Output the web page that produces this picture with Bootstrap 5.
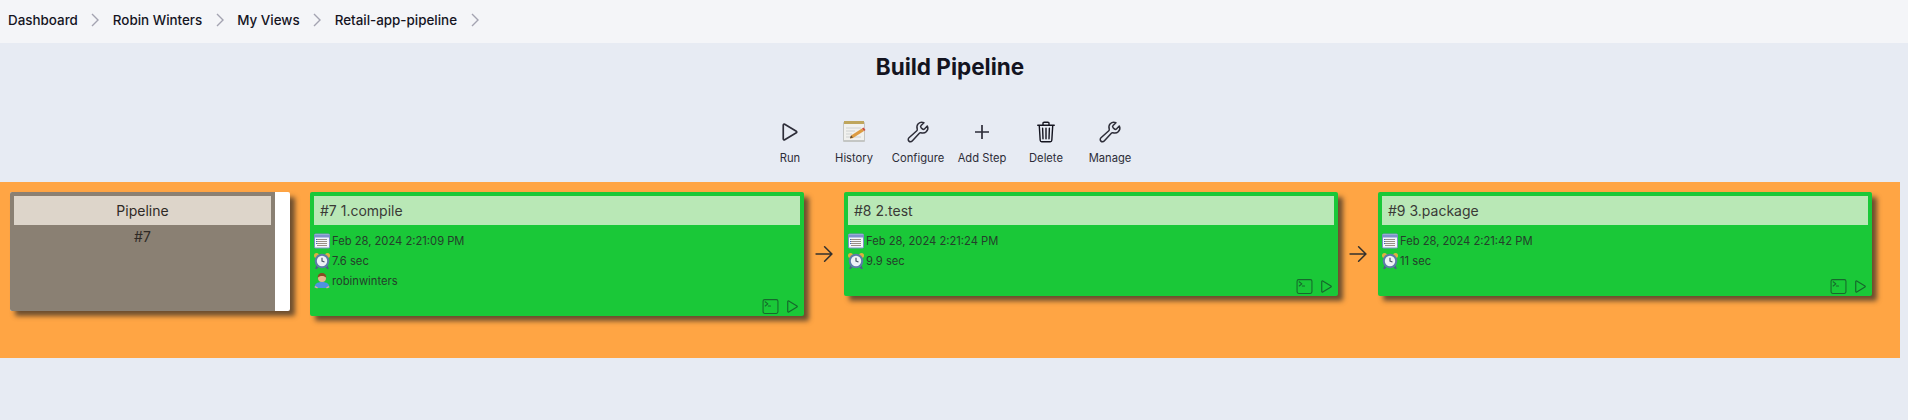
<!DOCTYPE html>
<html lang="en">

<head>
    <meta charset="UTF-8" />
    <meta name="viewport" content="width=device-width, initial-scale=1.0" />
    <title>Build Pipeline</title>
    <link href="https://cdn.jsdelivr.net/npm/bootstrap@5.3.3/dist/css/bootstrap.min.css" rel="stylesheet" />
    <style>
        body {
            background: #e7ebf3;
            font-family: Inter, "Liberation Sans", sans-serif;
            color: #14141f;
            height: 420px;
            overflow: hidden;
        }

        .crumb-bar {
            height: 43px;
            background: #f4f5f8;
            padding-left: 8px;
            padding-bottom: 3px;
            font-size: 13.4px;
            font-weight: 450;
            gap: 14.5px;
        }

        .crumb-bar a {
            color: #14141f;
            text-decoration: none;
        }

        .crumb-sep {
            width: 8px;
            height: 14px;
            margin: 0 -1px;
            color: #a3a3b1;
        }

        .page-main {
            width: 1900px;
        }

        .page-title {
            font-size: 22.5px;
            font-weight: 700;
            line-height: 30px;
            margin: 9px 0 0;
        }

        .tool-row {
            margin-top: 38px;
            height: 62px;
        }

        .tool-item {
            width: 64px;
            font-size: 11.2px;
            line-height: 15px;
            color: #2d2d38;
            text-decoration: none;
        }

        .tool-icon {
            width: 24px;
            height: 24px;
            margin-bottom: 7px;
        }

        .pipe-band {
            width: 1900px;
            height: 176px;
            background: #ffa544;
            padding: 10px;
        }

        .pipe-head {
            width: 280px;
            height: 119px;
            background: #fff;
            border-radius: 2px;
            box-shadow: 5px 5px 5px rgba(60, 50, 40, .75);
            flex-shrink: 0;
        }

        .pipe-head-inner {
            width: 265px;
            background: #8a8073;
            padding: 4px;
            color: #2f2a26;
            font-size: 14px;
        }

        .pipe-head-title {
            width: 257px;
            height: 29px;
            background: #ddd5ca;
            line-height: 29px;
            margin-bottom: 1px;
        }

        .pipe-gap {
            width: 40px;
            height: 124px;
            flex-shrink: 0;
            color: #33302c;
        }

        .pipe-gap svg {
            width: 26px;
            height: 26px;
        }

        .pipe-spacer {
            width: 20px;
            flex-shrink: 0;
        }

        .stage {
            width: 494px;
            background: #1ac838;
            padding: 4px;
            border-radius: 2px;
            box-shadow: 5px 5px 5px rgba(60, 50, 40, .75);
            flex-shrink: 0;
            color: #24402b;
            font-size: 11.2px;
        }

        .stage-tall {
            height: 124px;
        }

        .stage-short {
            height: 104px;
        }

        .stage-title {
            height: 29px;
            background: #b9e8b6;
            color: #3a3a36;
            font-size: 14px;
            line-height: 29px;
            padding-left: 6px;
        }

        .stage-meta {
            height: 20px;
            gap: 2px;
        }

        .stage-meta svg {
            width: 16px;
            height: 16px;
            flex-shrink: 0;
        }

        .stage-list {
            margin-top: 6px;
        }

        .stage-foot {
            bottom: 1px;
            right: 3px;
            gap: 5px;
            color: #16682c;
        }

        .stage-foot .run-ico {
            width: 17px;
            height: 17px;
        }

        .stage-foot .term-ico {
            width: 17px;
            height: 17px;
        }
    </style>
</head>

<body class="m-0">
    <svg width="0" height="0" class="position-absolute">
        <defs>
            <symbol id="ic-chev" viewBox="0 0 8 14">
                <path d="M1 1l6 6-6 6" fill="none" stroke="currentColor" stroke-width="1.4" />
            </symbol>
            <symbol id="ic-play" viewBox="0 0 512 512">
                <path d="M112 111v290c0 17.44 17 28.52 31 20.16l247.9-148.37c12.12-7.25 12.12-26.33 0-33.58L143 90.84c-14-8.36-31 2.72-31 20.16z" fill="none" stroke="currentColor" stroke-width="36" stroke-miterlimit="10" />
            </symbol>
            <symbol id="ic-wrench" viewBox="0 0 512 512">
                <path d="M393.87 190a32.1 32.1 0 01-45.25 0l-26.57-26.57a32.09 32.09 0 010-45.26L382.19 58a1 1 0 00-.3-1.64c-38.82-16.64-89.15-8.16-121.11 23.57-30.59 30.35-32.32 76-21.12 115.84a31.93 31.93 0 01-9.06 32.08L64 380a48.17 48.17 0 1068 68l153.2-167.23a31.93 31.93 0 0131.6-9.13c39.54 10.59 84.54 8.6 114.72-21.19 32.49-32 39.5-88.56 23.75-120.93a1 1 0 00-1.6-.26z" fill="none" stroke="currentColor" stroke-width="32" stroke-linecap="round" stroke-miterlimit="10" />
            </symbol>
            <symbol id="ic-term" viewBox="0 0 512 512">
                <rect x="32" y="48" width="448" height="416" rx="48" ry="48" fill="none" stroke="currentColor" stroke-width="32" stroke-linejoin="round" />
                <path d="M96 112l80 64-80 64M192 240h64" fill="none" stroke="currentColor" stroke-width="32" stroke-linecap="round" stroke-linejoin="round" />
            </symbol>
            <symbol id="ic-arrow" viewBox="0 0 512 512">
                <path d="M268 112l144 144-144 144M392 256H100" fill="none" stroke="currentColor" stroke-width="30" stroke-linecap="round" stroke-linejoin="round" />
            </symbol>
            <symbol id="ic-cal" viewBox="0 0 16 16">
                <rect x=".5" y="1" width="15" height="14" rx="1" fill="#f4f6fb" stroke="#7b8fc4" />
                <rect x="1" y="1.5" width="14" height="3" fill="#7d92cc" />
                <path d="M3 6.500h10M3 8.500h10M3 10.500h10M3 12.500h10" stroke="#9a8f86" />
                <path d="M2 6.500h1M2 8.500h1M2 10.500h1" stroke="#3d63c0" />
            </symbol>
            <symbol id="ic-clock" viewBox="0 0 16 16">
                <circle cx="2.500" cy="2.500" r="2.500" fill="#e0b040" />
                <circle cx="13.500" cy="2.500" r="2.500" fill="#e0b040" />
                <path d="M3.500 13l-1.500 3M12.500 13l1.500 3" stroke="#4a5f86" stroke-width="2" />
                <circle cx="8" cy="8" r="7.300" fill="#5d7ba8" />
                <circle cx="8" cy="8" r="5.200" fill="#eef2f6" />
                <path d="M8 4.800V8l2.500 1" fill="none" stroke="#4a5568" stroke-width="1.200" />
            </symbol>
            <symbol id="ic-user" viewBox="0 0 16 16">
                <path d="M.5 15c0-4 2.500-6 7.500-6s7.500 2 7.500 6z" fill="#4f92e0" />
                <circle cx="8" cy="5" r="4" fill="#eab58c" />
                <path d="M3.800 5C3.500 1.500 5.500 0 8 0s4.500 1.500 4.200 5C11.500 3.500 9.500 3 8 3s-3.500.5-4.200 2z" fill="#8a4a22" />
                <path d="M1 13.500l2.500 1.500M15 13.500L12.500 15" stroke="#eab58c" stroke-width="1.300" />
            </symbol>
        </defs>
    </svg>

    <nav class="crumb-bar d-flex align-items-center">
        <a href="#">Dashboard</a>
        <svg class="crumb-sep"><use href="#ic-chev" /></svg>
        <a href="#">Robin Winters</a>
        <svg class="crumb-sep"><use href="#ic-chev" /></svg>
        <a href="#">My Views</a>
        <svg class="crumb-sep"><use href="#ic-chev" /></svg>
        <a href="#">Retail-app-pipeline</a>
        <svg class="crumb-sep"><use href="#ic-chev" /></svg>
    </nav>

    <main class="page-main">
        <h1 class="page-title text-center">Build Pipeline</h1>

        <div class="tool-row d-flex justify-content-center">
            <a href="#" class="tool-item d-flex flex-column align-items-center">
                <svg class="tool-icon"><use href="#ic-play" /></svg>Run
            </a>
            <a href="#" class="tool-item d-flex flex-column align-items-center">
                <svg class="tool-icon" viewBox="0 0 24 24">
                    <rect x="1" y="2" width="22" height="20" rx="1" fill="#c4c6c4" />
                    <rect x="2" y="4" width="20" height="16" fill="#f1f1ee" />
                    <rect x="2" y="1" width="20" height="3" fill="#bfa65c" />
                    <path d="M4 8h15M4 11h9M4 14h6M4 17h15" stroke="#cfd2d2" />
                    <path d="M9 15.500l11-7 2 2.500-11 7-3 .8z" fill="#dd9c42" />
                    <path d="M20 8.500l1.500-1 2 2.500-1.500 1z" fill="#cf4a3c" />
                    <path d="M8 18.300l1-2.800 2 2z" fill="#5a4630" />
                </svg>History
            </a>
            <a href="#" class="tool-item d-flex flex-column align-items-center">
                <svg class="tool-icon"><use href="#ic-wrench" /></svg>Configure
            </a>
            <a href="#" class="tool-item d-flex flex-column align-items-center">
                <svg class="tool-icon" viewBox="0 0 24 24">
                    <path d="M12 5v14M5 12h14" fill="none" stroke="#2d2d38" stroke-width="1.700" />
                </svg>Add Step
            </a>
            <a href="#" class="tool-item d-flex flex-column align-items-center">
                <svg class="tool-icon" viewBox="0 0 512 512">
                    <path d="M112 112l20 320c.95 18.49 14.4 32 32 32h184c17.67 0 30.87-13.51 32-32l20-320M80 112h352M192 112V72a23.93 23.93 0 0124-24h80a23.93 23.93 0 0124 24v40M256 176v224M184 176l8 224M328 176l-8 224" fill="none" stroke="#14141f" stroke-width="30" stroke-linecap="round" stroke-linejoin="round" />
                </svg>Delete
            </a>
            <a href="#" class="tool-item d-flex flex-column align-items-center">
                <svg class="tool-icon"><use href="#ic-wrench" /></svg>Manage
            </a>
        </div>

        <div class="pipe-band d-flex align-items-start">
            <div class="pipe-head overflow-hidden">
                <div class="pipe-head-inner h-100 text-center">
                    <div class="pipe-head-title">Pipeline</div>
                    <div>#7</div>
                </div>
            </div>
            <div class="pipe-spacer"></div>

            <div class="stage stage-tall position-relative">
                <div class="stage-title">#7 1.compile</div>
                <div class="stage-list">
                    <div class="stage-meta d-flex align-items-center"><svg><use href="#ic-cal" /></svg>Feb 28, 2024 2:21:09 PM</div>
                    <div class="stage-meta d-flex align-items-center"><svg><use href="#ic-clock" /></svg>7.6 sec</div>
                    <div class="stage-meta d-flex align-items-center"><svg><use href="#ic-user" /></svg>robinwinters</div>
                </div>
                <div class="stage-foot position-absolute d-flex align-items-center">
                    <svg class="term-ico"><use href="#ic-term" /></svg>
                    <svg class="run-ico"><use href="#ic-play" /></svg>
                </div>
            </div>

            <div class="pipe-gap d-flex align-items-center justify-content-center">
                <svg><use href="#ic-arrow" /></svg>
            </div>

            <div class="stage stage-short position-relative">
                <div class="stage-title">#8 2.test</div>
                <div class="stage-list">
                    <div class="stage-meta d-flex align-items-center"><svg><use href="#ic-cal" /></svg>Feb 28, 2024 2:21:24 PM</div>
                    <div class="stage-meta d-flex align-items-center"><svg><use href="#ic-clock" /></svg>9.9 sec</div>
                </div>
                <div class="stage-foot position-absolute d-flex align-items-center">
                    <svg class="term-ico"><use href="#ic-term" /></svg>
                    <svg class="run-ico"><use href="#ic-play" /></svg>
                </div>
            </div>

            <div class="pipe-gap d-flex align-items-center justify-content-center">
                <svg><use href="#ic-arrow" /></svg>
            </div>

            <div class="stage stage-short position-relative">
                <div class="stage-title">#9 3.package</div>
                <div class="stage-list">
                    <div class="stage-meta d-flex align-items-center"><svg><use href="#ic-cal" /></svg>Feb 28, 2024 2:21:42 PM</div>
                    <div class="stage-meta d-flex align-items-center"><svg><use href="#ic-clock" /></svg>11 sec</div>
                </div>
                <div class="stage-foot position-absolute d-flex align-items-center">
                    <svg class="term-ico"><use href="#ic-term" /></svg>
                    <svg class="run-ico"><use href="#ic-play" /></svg>
                </div>
            </div>
        </div>
    </main>

    <script src="https://cdn.jsdelivr.net/npm/bootstrap@5.3.3/dist/js/bootstrap.bundle.min.js"></script>
</body>

</html>
